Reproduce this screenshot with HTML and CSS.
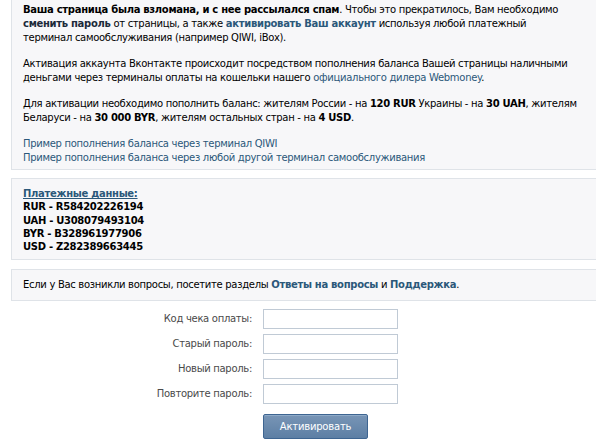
FILE: index.html
```
<!DOCTYPE html>
<html lang="ru">
<head>
<meta charset="utf-8">
<link rel="stylesheet" href="styles.css">
</head>
<body>
<div class="page">
  <div class="box box-top">
    <p class="para"><b>Ваша страница была взломана, и с нее рассылался спам</b>. Чтобы это прекратилось, Вам необходимо<br><b class="dark">сменить пароль</b> от страницы, а также <a class="bold-link" href="#">активировать Ваш аккаунт</a> используя любой платежный<br>терминал самообслуживания (например QIWI, iBox).</p>
    <p class="para">Активация аккаунта Вконтакте происходит посредством пополнения баланса Вашей страницы наличными<br>деньгами через терминалы оплаты на кошельки нашего <a class="link" href="#">официального дилера Webmoney</a>.</p>
    <p class="para">Для активации необходимо пополнить баланс: жителям России - на <b>120 RUR</b> Украины - на <b>30 UAH</b>, жителям<br>Беларуси - на <b>30 000 BYR</b>, жителям остальных стран - на <b>4 USD</b>.</p>
    <p class="para"><a class="link" href="#">Пример пополнения баланса через терминал QIWI</a><br><a class="link" href="#">Пример пополнения баланса через любой другой терминал самообслуживания</a></p>
  </div>
  <div class="box box-pay">
    <a class="pay-title" href="#">Платежные данные:</a>
    <div class="pay-line">RUR - R584202226194</div>
    <div class="pay-line">UAH - U308079493104</div>
    <div class="pay-line">BYR - B328961977906</div>
    <div class="pay-line">USD - Z282389663445</div>
  </div>
  <div class="box box-help">
    Если у Вас возникли вопросы, посетите разделы <a class="bold-link" href="#">Ответы на вопросы</a> и <a class="bold-link" href="#">Поддержка</a>.
  </div>
</div>
<form class="form">
  <label class="label">Код чека оплаты:</label><input class="field" type="text">
  <label class="label">Старый пароль:</label><input class="field" type="password">
  <label class="label">Новый пароль:</label><input class="field" type="password">
  <label class="label">Повторите пароль:</label><input class="field" type="password">
  <span></span><button class="button" type="button">Активировать</button>
</form>
</body>
</html>
```
FILE: styles.css
```
html, body {
  margin: 0;
  padding: 0;
  overflow: hidden;
  background: #fff;
}
body {
  font-family: "DejaVu Sans", Tahoma, sans-serif;
  font-size: 10px;
  line-height: 14px;
  letter-spacing: -0.3px;
  color: #000;
}
.page {
  width: 600px;
  margin-left: 11px;
}
.box {
  background: #f7f7f9;
  border: 1px solid #dfe3e8;
  padding: 8px 11px 7px;
  white-space: nowrap;
}
.box-top {
  border-top: none;
  padding-top: 3px;
  padding-bottom: 4px;
  margin-bottom: 8px;
}
.para {
  margin: 0 0 12px;
}
.para:last-child {
  margin-bottom: 0;
}
.box-pay {
  margin-bottom: 9px;
  font-weight: bold;
  line-height: 13.3px;
  padding-top: 8px;
  padding-bottom: 6px;
}
.pay-title {
  color: #2b587a;
  text-decoration: underline;
  display: block;
}
.box-help {
  padding: 8px 11px;
}
b { font-weight: bold; }
.dark { color: #1c2a3a; }
a { text-decoration: none; }
.link { color: #2b587a; }
.bold-link { color: #2b587a; font-weight: bold; }
.form {
  display: grid;
  grid-template-columns: 241px 135px;
  column-gap: 11px;
  row-gap: 5px;
  margin: 8px 0 0 11px;
}
.label {
  text-align: right;
  color: #4a4a4a;
  line-height: 20px;
  height: 20px;
}
.field {
  box-sizing: border-box;
  width: 135px;
  height: 20px;
  margin: 0;
  border: 1px solid #c0cad5;
  background: #fff;
  padding: 2px 3px;
}
.button {
  box-sizing: border-box;
  margin-top: 5px;
  width: 105px;
  height: 25px;
  border: 1px solid #3e6591;
  border-radius: 2px;
  background: linear-gradient(#7895b6, #5d7fa4);
  color: #fff;
  font-family: "DejaVu Sans", Tahoma, sans-serif;
  font-size: 10px;
  letter-spacing: -0.2px;
  padding: 0;
  box-shadow: inset 0 1px 0 #8eaac8;
}
```
